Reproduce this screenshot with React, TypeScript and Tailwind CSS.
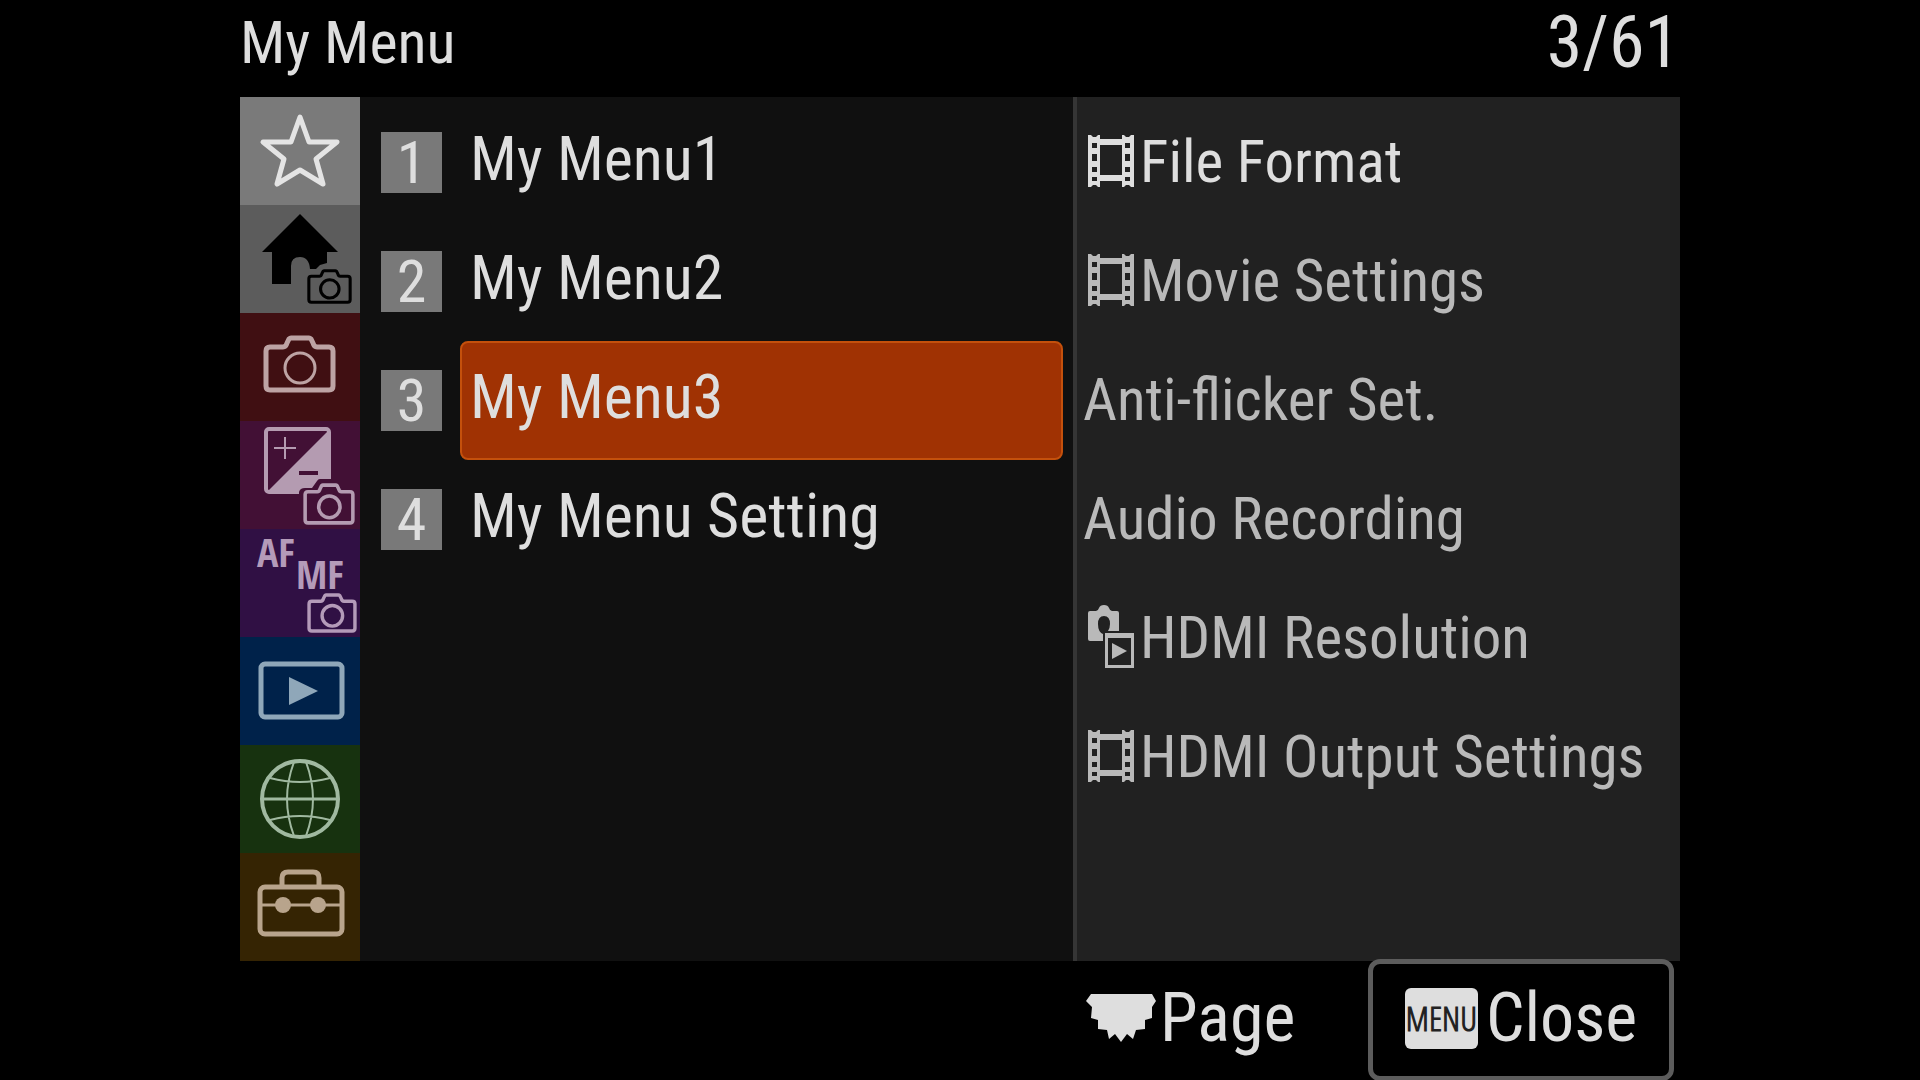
import { useState } from 'react'
import type { ReactNode } from 'react'
import clsx from 'clsx'

/* ---------------- Icons ---------------- */

type CameraProps = { x: number; y: number; w: number; h: number; stroke: number; ring?: number }

function Camera({ x, y, w, h, stroke, ring }: CameraProps) {
  return (
    <svg x={x} y={y} width={w} height={h} viewBox="0 0 73 58" fill="none" stroke="currentColor" preserveAspectRatio="none">
      <path
        d="M7 12H20Q23 12 24 8L26 4Q27 3 28 3H46Q47 3 48 4L50 8Q51 12 54 12H66Q70 12 70 16V51Q70 55 66 55H7Q3 55 3 51V16Q3 12 7 12Z"
        strokeWidth={stroke}
      />
      <circle cx="37" cy="33" r="15" strokeWidth={ring ?? stroke} />
    </svg>
  )
}

function TabIcon({ children }: { children: ReactNode }) {
  return (
    <svg
      viewBox="0 0 120 108"
      className="h-[108px] w-[120px] overflow-visible"
      fill="none"
      stroke="currentColor"
      aria-hidden="true"
    >
      {children}
    </svg>
  )
}

function FilmIcon() {
  return (
    <svg viewBox="0 0 46 52" className="h-[52px] w-[46px]" fill="currentColor" aria-hidden="true">
      <path
        fillRule="evenodd"
        d="M0 0H3L5 2H8L10 0H12V4H34V0H36L38 2H41L43 0H46V52H43L41 50H38L36 52H34V46H12V52H10L8 50H5L3 52H0Z
           M12 10V40H34V10Z
           M4 8V13H9V8Z M4 19V26H9V19Z M4 32V37H9V32Z M4 42V46H9V42Z
           M37 8V13H42V8Z M37 19V26H42V19Z M37 32V37H42V32Z M37 42V46H42V42Z"
      />
    </svg>
  )
}

function ShootPlayIcon() {
  return (
    <svg viewBox="0 0 46 63" className="h-[63px] w-[46px]" fill="currentColor" aria-hidden="true">
      <path
        fillRule="evenodd"
        d="M2 6H8Q10 6 11 3Q12 0 16 0Q20 0 21 3Q22 6 24 6H29Q31 6 31 8V26H20Q22 23 22 19Q22 11 16 11Q10 11 10 19Q10 27 15 29V36H2Q0 36 0 34V8Q0 6 2 6Z"
      />
      <path fillRule="evenodd" d="M17 28H46V63H17Z M20 33V60H43V33Z" />
      <path d="M24 38L39 46L24 54Z" />
    </svg>
  )
}

function DialIcon() {
  return (
    <svg viewBox="0 0 70 48" className="h-[48px] w-[70px]" fill="currentColor" aria-hidden="true">
      <path d="M5 0H66L70 7L66 13V24L59 26V35L50 36L47 45L41 40L35 48L29 40L23 45L21 36L12 35V26L5 24L6 13L0 7Z" />
    </svg>
  )
}

/* ---------------- Data ---------------- */

const TABS = [
  {
    label: 'My Menu',
    className: 'bg-[#7a7a7a] text-[#e4e4e4]',
    icon: (
      <path
        d="M60 20L69 45H97L76 62L83 87L60 73L37 87L44 62L23 45H51Z"
        strokeWidth="5"
        strokeLinejoin="round"
      />
    ),
  },
  {
    label: 'Main',
    className: 'bg-[#5c5c5c] text-black',
    icon: (
      <>
        <path
          stroke="none"
          fill="currentColor"
          d="M60 9L98 47H87V58L80 60L76 64H70Q69 52 60 52Q51 52 51 61V79H32V47H22Z"
        />
        <Camera x={67} y={64} w={45} h={35} stroke={5} />
      </>
    ),
  },
  {
    label: 'Shooting',
    className: 'bg-[#400f12] text-[#bda3a4]',
    icon: <Camera x={23} y={22} w={73} h={58} stroke={5} ring={3} />,
  },
  {
    label: 'Exposure/Color',
    className: 'bg-[#421035] text-[#b49bb1]',
    icon: (
      <>
        <rect x="26" y="8" width="63" height="63" rx="3" strokeWidth="4" />
        <path stroke="none" fill="currentColor" d="M90 8V72H26Z" />
        <path d="M34 27H56M45 16V38" strokeWidth="2" />
        <path d="M59 52H78" stroke="#421035" strokeWidth="4" />
        <path stroke="none" fill="#421035" d="M59 76V71Q60 67 65 67H72L77 60Q78 58 80 58H98V76Z" />
        <Camera x={63} y={62} w={52} h={42} stroke={5} />
      </>
    ),
  },
  {
    label: 'Focus',
    className: 'bg-[#301044] text-[#b49bb9]',
    icon: (
      <>
        <g stroke="none" fill="currentColor" className="font-['Open_Sans_Condensed',sans-serif] text-[40px] font-bold">
          <text x="17" y="38">AF</text>
          <text x="56" y="60">MF</text>
        </g>
        <Camera x={67} y={64} w={50} h={40} stroke={5} />
      </>
    ),
  },
  {
    label: 'Playback',
    className: 'bg-[#00224a] text-[#8fa7b9]',
    icon: (
      <>
        <rect x="21" y="27" width="81" height="53" rx="4" strokeWidth="5" />
        <path stroke="none" fill="currentColor" d="M49 40L78 54L49 68Z" />
      </>
    ),
  },
  {
    label: 'Network',
    className: 'bg-[#17320f] text-[#a0b9a0]',
    icon: (
      <>
        <circle cx="60" cy="54" r="38" strokeWidth="4" />
        <path d="M22 54H98" strokeWidth="3" />
        <path
          d="M54 17Q47 36 47 54Q47 72 54 91M66 17Q73 36 73 54Q73 72 66 91M30 33Q60 41 90 33M30 75Q60 67 90 75"
          strokeWidth="2"
        />
      </>
    ),
  },
  {
    label: 'Setup',
    className: 'bg-[#352403] text-[#b8a48c]',
    icon: (
      <>
        <rect x="20" y="34" width="82" height="47" rx="5" strokeWidth="5" />
        <path d="M42 34V25Q42 19 48 19H73Q79 19 79 25V34" strokeWidth="5" />
        <path d="M20 52H102" strokeWidth="3" />
        <circle cx="43" cy="52" r="8" stroke="none" fill="currentColor" />
        <circle cx="78" cy="52" r="8" stroke="none" fill="currentColor" />
      </>
    ),
  },
]

const PAGES = ['My Menu1', 'My Menu2', 'My Menu3', 'My Menu Setting']

const ITEMS = [
  { label: 'File Format', icon: <FilmIcon />, active: true },
  { label: 'Movie Settings', icon: <FilmIcon /> },
  { label: 'Anti-flicker Set.' },
  { label: 'Audio Recording' },
  { label: 'HDMI Resolution', icon: <ShootPlayIcon /> },
  { label: 'HDMI Output Settings', icon: <FilmIcon /> },
]

const COLUMNS = 'grid grid-cols-[120px_minmax(0,713fr)_minmax(0,607fr)]'

/* ---------------- Screen ---------------- */

export default function App() {
  const [selected, setSelected] = useState(2)

  return (
    <div className="min-h-screen bg-black font-['Roboto_Condensed',sans-serif] text-[#dedede]">
      <div className="mx-auto flex min-h-screen w-3/4 flex-col">
        <header className="flex h-[97px] items-center justify-between pb-3">
          <h1 className="text-[60px] leading-none">My Menu</h1>
          <span className="text-[72px] leading-none">3/61</span>
        </header>

        <main className={clsx(COLUMNS, 'flex-1')}>
          <nav className="flex flex-col">
            {TABS.map((tab) => (
              <button
                key={tab.label}
                type="button"
                aria-label={tab.label}
                className={clsx('flex min-h-0 flex-1 items-center justify-center', tab.className)}
              >
                <TabIcon>{tab.icon}</TabIcon>
              </button>
            ))}
          </nav>

          <ul className="flex flex-col bg-[#101010] pt-[6px] pr-[10px] pl-[21px]">
            {PAGES.map((page, i) => (
              <li key={page} className="flex h-[119px] items-center gap-[18px]">
                <span className="flex h-[61px] w-[61px] shrink-0 items-center justify-center bg-[#797979] text-[60px] leading-none">
                  {i + 1}
                </span>
                <button
                  type="button"
                  onClick={() => setSelected(i)}
                  className={clsx(
                    'flex h-full flex-1 items-center rounded-lg border-2 pb-2 pl-2 text-left text-[62px] leading-none whitespace-nowrap',
                    i === selected ? 'border-[#c4500c] bg-[#a03203]' : 'border-transparent',
                  )}
                >
                  {page}
                </button>
              </li>
            ))}
          </ul>

          <ul className="border-l-4 border-[#353535] bg-[#212121] pt-[4px] text-[#b9b9b9]">
            {ITEMS.map((item) => (
              <li
                key={item.label}
                className={clsx(
                  'flex h-[119px] items-center text-[59px] leading-none whitespace-nowrap',
                  item.icon ? 'gap-[6px] pl-[11px]' : 'pl-[6px]',
                  item.active && 'text-[#dedede]',
                )}
              >
                {item.icon}
                <span className="pt-0.5">{item.label}</span>
              </li>
            ))}
          </ul>
        </main>

        <footer className={clsx(COLUMNS, 'h-[120px]')}>
          <div className="col-start-3 -mt-[2px] flex justify-between pr-[6px] pl-[13px]">
            <button type="button" className="flex items-center gap-1 pb-1 text-[68px] leading-none">
              <DialIcon />
              Page
            </button>
            <button
              type="button"
              className="flex w-[306px] items-center justify-center gap-2 rounded-xl border-[5px] border-[#5c5c5c] pb-1 text-[68px] leading-none"
            >
              <span className="flex h-[61px] w-[73px] items-center justify-center rounded-md bg-[#dedede] font-['Open_Sans_Condensed_Light',sans-serif] text-[34px] leading-none font-bold text-[#222]">
                MENU
              </span>
              Close
            </button>
          </div>
        </footer>
      </div>
    </div>
  )
}
